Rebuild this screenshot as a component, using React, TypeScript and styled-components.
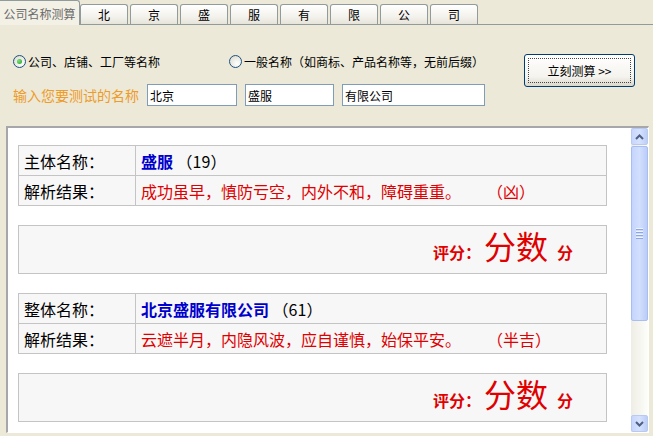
import styled, { createGlobalStyle, css } from "styled-components"

const GlobalStyle = createGlobalStyle`
  html, body {
    margin: 0;
    padding: 0;
  }
  body {
    width: 653px;
    height: 436px;
    overflow: hidden;
    background: #ECE9D8;
    font-family: "Noto Sans CJK SC", "Noto Sans", sans-serif;
    color: #000;
  }
`

const TabBar = styled.div`
    display: flex;
    align-items: flex-end;
    height: 25px;
    box-sizing: border-box;
    border-bottom: 1px solid #919B9C;
`
const Tab = styled.div<{ $active?: boolean }>`
    box-sizing: border-box;
    display: flex;
    align-items: center;
    justify-content: center;
    font-size: 12px;
    border: 1px solid #919B9C;
    border-bottom: none;
    border-radius: 3px 3px 0 0;
    width: 48px;
    height: 20px;
    margin-right: 2px;
    background: linear-gradient(#FFFFFF, #F3F2EC 60%, #E6E4DA);
    ${p => p.$active && css`
        width: 80px;
        height: 25px;
        margin-right: 0;
        margin-bottom: -1px;
        border-left: none;
        border-radius: 0 3px 0 0;
        color: #6B6B6B;
        background: #F3F1E6;
    `}
`

const Form = styled.div`
    display: flex;
    align-items: flex-start;
    padding: 29px 0 0 13px;
`
const Fields = styled.div`
    width: 472px;
    display: flex;
    flex-direction: column;
    gap: 16px;
`
const RadioRow = styled.div`
    display: flex;
    align-items: center;
    height: 14px;
`
const RadioOption = styled.label<{ $width?: number }>`
    display: flex;
    align-items: center;
    gap: 2px;
    font-size: 12px;
    white-space: nowrap;
    width: ${p => (p.$width ? p.$width + "px" : "auto")};
`
const RadioDot = styled.span<{ $checked?: boolean }>`
    position: relative;
    flex: none;
    width: 13px;
    height: 13px;
    box-sizing: border-box;
    border-radius: 50%;
    border: 1px solid #1C5180;
    background: radial-gradient(circle at 65% 70%, #FFFFFF, #E8E8E0 60%, #D2D2C8);
    ${p => p.$checked && css`
        &::after {
            content: "";
            position: absolute;
            left: 3px;
            top: 3px;
            width: 5px;
            height: 5px;
            border-radius: 50%;
            background: radial-gradient(circle at 35% 35%, #7BE07B, #21A121);
        }
    `}
`
const InputRow = styled.div`
    display: flex;
    align-items: center;
    gap: 8px;
    height: 22px;
`
const Prompt = styled.span`
    width: 127px;
    font-size: 14px;
    color: #EE9B28;
    white-space: nowrap;
`
const NameInput = styled.input<{ $width: number }>`
    box-sizing: border-box;
    width: ${p => p.$width}px;
    height: 22px;
    border: 1px solid #7F9DB9;
    background: #fff;
    padding: 0 2px;
    font-family: inherit;
    font-size: 12px;
    outline: none;
`
const Button = styled.button`
    margin-left: 39px;
    width: 111px;
    height: 33px;
    box-sizing: border-box;
    border: 1px solid #003C74;
    border-radius: 3px;
    background: linear-gradient(#FFFFFF, #F4F3EE 70%, #DCD8CB);
    padding: 3px;
    font-family: inherit;
    font-size: 12px;
    cursor: pointer;
`
const ButtonFace = styled.span`
    display: flex;
    align-items: center;
    justify-content: center;
    height: 100%;
    border: 1px dotted #444;
    box-sizing: border-box;
`

const Panel = styled.div`
    display: flex;
    margin: 20px 4px 0 6px;
    height: 307px;
    box-sizing: border-box;
    border-top: 2px solid #A7A6AA;
    border-left: 2px solid #A7A6AA;
    border-right: 1px solid #fff;
    border-bottom: 1px solid #fff;
    background: #fff;
`
const Content = styled.div`
    flex: 1;
    overflow: hidden;
    display: flex;
    flex-direction: column;
    gap: 19px;
    padding: 17px 24px 0 10px;
`
const ResultTable = styled.table`
    width: 100%;
    border-collapse: collapse;
    background: #F7F7F7;
    font-size: 16px;
    td {
        border: 1px solid #C4C4C4;
        height: 29px;
        padding: 0 0 0 5px;
        white-space: nowrap;
    }
    td:first-child {
        width: 111px;
    }
`
const Name = styled.b`
    color: #0000CC;
`
const Verdict = styled.span`
    color: #E00000;
`
const Luck = styled.span`
    color: #E00000;
    margin-left: 34px;
`
const ScoreBox = styled.div`
    height: 49px;
    box-sizing: border-box;
    border: 1px solid #C4C4C4;
    background: #F7F7F7;
    display: flex;
    align-items: center;
    justify-content: flex-end;
    padding: 0 33px 10px 0;
`
const ScoreLine = styled.div`
    display: flex;
    align-items: baseline;
    color: #E00000;
`
const ScoreLabel = styled.b`
    font-size: 16px;
`
const ScoreValue = styled.span`
    font-size: 32px;
    line-height: 40px;
    margin: 0 9px 0 3px;
`

const Scrollbar = styled.div`
    width: 17px;
    flex: none;
    display: flex;
    flex-direction: column;
    background: linear-gradient(90deg, #EEEDE5, #FDFDFA);
`
const ArrowButton = styled.div`
    width: 17px;
    height: 17px;
    box-sizing: border-box;
    border: 1px solid #B7CAF5;
    border-radius: 2px;
    background: linear-gradient(90deg, #C8D6FB, #D6E2FD 50%, #BCCDF7);
    display: flex;
    align-items: center;
    justify-content: center;
`
const Thumb = styled.div`
    margin-top: 1px;
    height: 175px;
    box-sizing: border-box;
    border: 1px solid #A9BEF0;
    border-radius: 2px;
    background: linear-gradient(90deg, #C4D4FC, #D2DFFD 50%, #BACCF8);
    display: flex;
    flex-direction: column;
    align-items: center;
    justify-content: center;
    gap: 1px;
`
const Grip = styled.span`
    width: 7px;
    height: 1px;
    background: #EEF3FE;
    box-shadow: 0 1px 0 #8CA6E0;
    margin-bottom: 1px;
`
const Track = styled.div`
    flex: 1;
`

function Chevron({ down }: { down?: boolean }) {
    return (
        <svg width="9" height="6" viewBox="0 0 9 6">
            <path d={down ? "M1 1 L4.5 4.5 L8 1" : "M1 5 L4.5 1.5 L8 5"} fill="none" stroke="#4D6185" strokeWidth="2" />
        </svg>
    )
}

const tabs = ["北", "京", "盛", "服", "有", "限", "公", "司"]

const results = [
    { title: "主体名称：", name: "盛服", num: 19, text: "成功虽早，慎防亏空，内外不和，障碍重重。", luck: "（凶）" },
    { title: "整体名称：", name: "北京盛服有限公司", num: 61, text: "云遮半月，内隐风波，应自谨慎，始保平安。", luck: "（半吉）" },
]

export default function App() {
    return (
        <>
            <GlobalStyle />
            <TabBar>
                <Tab $active>公司名称测算</Tab>
                {tabs.map(t => <Tab key={t}>{t}</Tab>)}
            </TabBar>

            <Form>
                <Fields>
                    <RadioRow>
                        <RadioOption $width={216}><RadioDot $checked />公司、店铺、工厂等名称</RadioOption>
                        <RadioOption><RadioDot />一般名称（如商标、产品名称等，无前后缀）</RadioOption>
                    </RadioRow>
                    <InputRow>
                        <Prompt>输入您要测试的名称</Prompt>
                        <NameInput $width={90} defaultValue="北京" />
                        <NameInput $width={89} defaultValue="盛服" />
                        <NameInput $width={145} defaultValue="有限公司" />
                    </InputRow>
                </Fields>
                <Button><ButtonFace>立刻测算 &gt;&gt;</ButtonFace></Button>
            </Form>

            <Panel>
                <Content>
                    {results.map(r => (
                        <Section key={r.title} {...r} />
                    ))}
                </Content>
                <Scrollbar>
                    <ArrowButton><Chevron /></ArrowButton>
                    <Thumb><Grip /><Grip /><Grip /><Grip /></Thumb>
                    <Track />
                    <ArrowButton><Chevron down /></ArrowButton>
                </Scrollbar>
            </Panel>
        </>
    )
}

function Section({ title, name, num, text, luck }: { title: string, name: string, num: number, text: string, luck: string }) {
    return (
        <>
            <ResultTable>
                <tbody>
                    <tr>
                        <td>{title}</td>
                        <td><Name>{name}</Name> （{num}）</td>
                    </tr>
                    <tr>
                        <td>解析结果：</td>
                        <td><Verdict>{text}</Verdict><Luck>{luck}</Luck></td>
                    </tr>
                </tbody>
            </ResultTable>
            <ScoreBox>
                <ScoreLine>
                    <ScoreLabel>评分：</ScoreLabel>
                    <ScoreValue>分数</ScoreValue>
                    <ScoreLabel>分</ScoreLabel>
                </ScoreLine>
            </ScoreBox>
        </>
    )
}
